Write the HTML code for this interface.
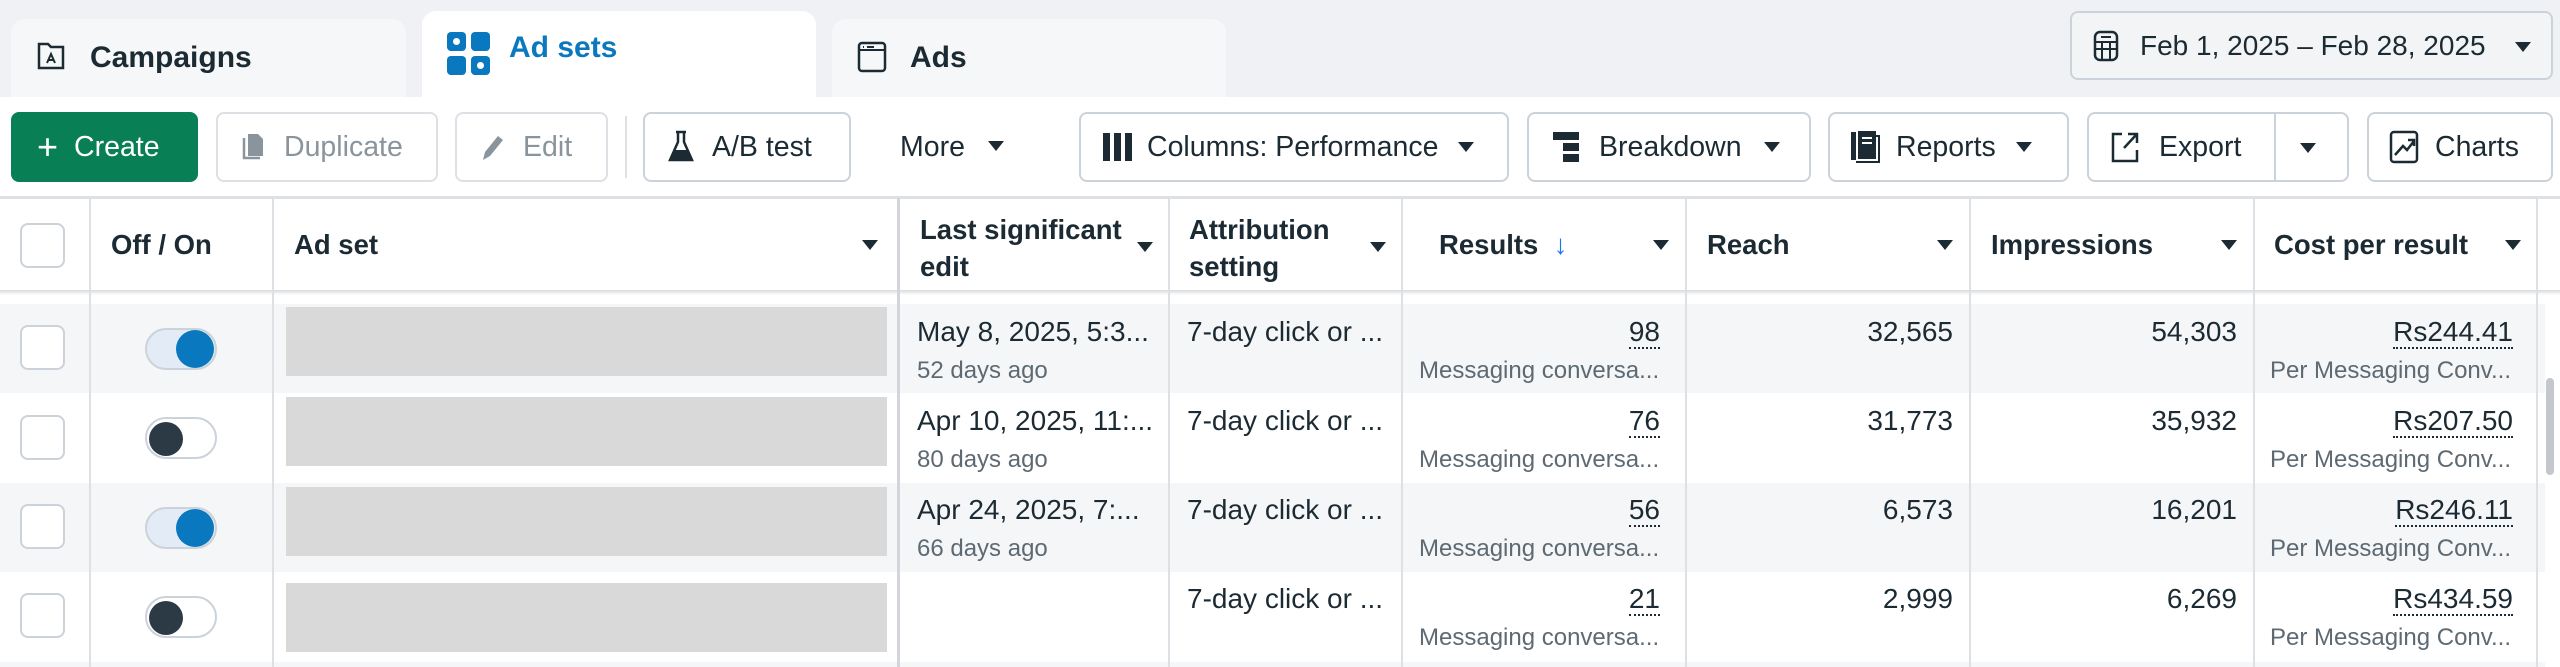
<!DOCTYPE html>
<html><head><meta charset="utf-8">
<style>
*{box-sizing:border-box;margin:0;padding:0}
html,body{width:2560px;height:667px;overflow:hidden;background:#fff}
body{font-family:"Liberation Sans",sans-serif;color:#1c2b33;position:relative}
.a{position:absolute}
.top{left:0;top:0;width:2560px;height:97px;background:#eff1f4}
.tab{position:absolute;border-radius:14px 14px 0 0;background:#f6f7f9;font-weight:bold;font-size:30px;display:flex;align-items:center}
.btn{position:absolute;top:112px;height:70px;border:2px solid #cbd2d9;border-radius:8px;background:#fff;display:flex;align-items:center;font-size:28.5px;color:#1c2b33;white-space:nowrap}
.dis{color:#8a949c;border-color:#dde1e5}
.caret{display:inline-block;width:0;height:0;border-left:8px solid transparent;border-right:8px solid transparent;border-top:10px solid #1c2b33}
.hd{position:absolute;font-size:27.5px;font-weight:bold;line-height:37px;white-space:nowrap}
.vl{position:absolute;top:198px;width:2px;height:469px;background:#dde0e4}
.row{position:absolute;left:0;width:2545px;height:89px}
.cb{position:absolute;left:20px;width:45px;height:45px;border:2px solid #cbd2d9;border-radius:8px;background:#fff}
.tg{position:absolute;left:145px;width:72px;height:42px;border-radius:21px;border:2px solid #cbd2d9}
.ph{position:absolute;left:286px;width:601px;height:69px;background:#d9d9d9}
.t{position:absolute;font-size:28px;white-space:nowrap}
.s{position:absolute;font-size:24px;color:#5e6a73;white-space:nowrap}
.n{position:absolute;font-size:28px;text-align:right;white-space:nowrap}
.u{border-bottom:2px dotted #1c2b33;line-height:30px}
</style></head><body>
<div class="a top"></div>
<div class="tab" style="left:11px;top:19px;width:395px;height:78px"><svg class="a" style="left:26px;top:22px" width="28" height="30" viewBox="0 0 28 30"><path d="M2 3h9l3 3h12v21H2z" fill="none" stroke="#1c2b33" stroke-width="2.5"/><path d="M10 22l4-9 4 9M11.5 19h5" fill="none" stroke="#1c2b33" stroke-width="2"/></svg><span style="margin-left:79px">Campaigns</span></div>
<div class="tab" style="left:422px;top:11px;width:394px;height:86px;background:#fff;color:#0a78be"><svg class="a" style="left:25px;top:21px" width="43" height="43" viewBox="0 0 43 43"><rect x="0" y="0" width="19" height="19" rx="4" fill="#0a78be"/><rect x="24" y="0" width="19" height="19" rx="4" fill="#0a78be"/><rect x="0" y="24" width="19" height="19" rx="4" fill="#0a78be"/><rect x="24" y="24" width="19" height="19" rx="4" fill="#0a78be"/><circle cx="9.5" cy="9.5" r="3.5" fill="#fff"/><circle cx="33.5" cy="33.5" r="3.5" fill="#fff"/></svg><span style="margin-left:87px;margin-top:-12px">Ad sets</span></div>
<div class="tab" style="left:832px;top:19px;width:394px;height:78px"><svg class="a" style="left:25px;top:22px" width="30" height="32" viewBox="0 0 30 32"><rect x="2" y="2" width="26" height="28" rx="3" fill="none" stroke="#1c2b33" stroke-width="2.5"/><path d="M2 9h26M6 6h1M10 6h7" stroke="#1c2b33" stroke-width="2"/></svg><span style="margin-left:78px">Ads</span></div>
<div class="a" style="left:2070px;top:11px;width:483px;height:69px;border:2px solid #cbd2d9;border-radius:8px;background:#f2f4f6;display:flex;align-items:center;font-size:28px;white-space:nowrap"><svg class="a" style="left:21px;top:17px" width="26" height="32" viewBox="0 0 26 32"><rect x="2" y="2" width="22" height="28" rx="5" fill="none" stroke="#1c2b33" stroke-width="2.5"/><path d="M2 12h22M2 19h22M9 12v18M17 12v18M8 7h10" stroke="#1c2b33" stroke-width="2"/></svg><span style="margin-left:68px">Feb 1, 2025 – Feb 28, 2025</span><span class="caret a" style="left:443px;top:29px"></span></div>

<div class="btn" style="left:11px;width:187px;background:#087f55;border-color:#087f55;color:#fff"><span style="margin-left:24px;font-size:36px;font-weight:300">+</span><span style="margin-left:16px">Create</span></div>
<div class="btn dis" style="left:216px;width:222px"><svg style="margin-left:22px" width="26" height="30" viewBox="0 0 26 30"><path d="M4 6v20h16" fill="none" stroke="#8a949c" stroke-width="2.5"/><path d="M8 2h10l5 5v17H8z" fill="#8a949c"/></svg><span style="margin-left:18px">Duplicate</span></div>
<div class="btn dis" style="left:455px;width:153px"><svg style="margin-left:22px" width="26" height="30" viewBox="0 0 26 30"><path d="M4 28l2-8L19 4l5 4L11 24z" fill="#8a949c"/></svg><span style="margin-left:18px">Edit</span></div>
<div class="a" style="left:625px;top:116px;width:2px;height:62px;background:#dde0e4"></div>
<div class="btn" style="left:643px;width:208px"><svg style="margin-left:23px" width="26" height="34" viewBox="0 0 26 34"><path d="M8 2h10M10 2v10L2 30h22L16 12V2" fill="none" stroke="#1c2b33" stroke-width="2.5"/><path d="M6 20h14l4 10H2z" fill="#1c2b33"/></svg><span style="margin-left:18px">A/B test</span></div>
<div class="a" style="left:900px;top:131px;font-size:28.5px">More</div><span class="caret a" style="left:988px;top:141px"></span>
<div class="btn" style="left:1079px;width:430px"><svg style="margin-left:22px" width="30" height="28" viewBox="0 0 30 28"><rect x="0" y="0" width="7" height="28" fill="#1c2b33"/><rect x="11" y="0" width="7" height="28" fill="#1c2b33"/><rect x="22" y="0" width="7" height="28" fill="#1c2b33"/></svg><span style="margin-left:14px">Columns: Performance</span><span class="caret" style="margin-left:20px"></span></div>
<div class="btn" style="left:1527px;width:284px"><svg style="margin-left:24px" width="26" height="30" viewBox="0 0 26 30"><rect x="0" y="0" width="26" height="8" fill="#1c2b33"/><rect x="10" y="11" width="16" height="8" fill="#1c2b33"/><rect x="10" y="22" width="16" height="8" fill="#1c2b33"/></svg><span style="margin-left:20px">Breakdown</span><span class="caret" style="margin-left:22px"></span></div>
<div class="btn" style="left:1828px;width:241px"><svg style="margin-left:20px" width="30" height="34" viewBox="0 0 30 34"><rect x="1" y="2" width="5" height="28" fill="#1c2b33"/><rect x="8" y="1" width="18" height="28" fill="#1c2b33"/><path d="M12 8h10M12 13h10" stroke="#fff" stroke-width="2"/><path d="M26 6h3v26H6" fill="none" stroke="#1c2b33" stroke-width="2"/></svg><span style="margin-left:16px">Reports</span><span class="caret" style="margin-left:20px"></span></div>
<div class="btn" style="left:2087px;width:262px"><svg style="margin-left:21px" width="30" height="34" viewBox="0 0 30 34"><path d="M12 4H3v27h24V20" fill="none" stroke="#1c2b33" stroke-width="2.5"/><path d="M14 18L26 5M18 4h9v9" fill="none" stroke="#1c2b33" stroke-width="2.5"/></svg><span style="margin-left:19px">Export</span><div class="a" style="left:185px;top:0;width:2px;height:66px;background:#cbd2d9"></div><span class="caret a" style="left:211px;top:29px"></span></div>
<div class="btn" style="left:2367px;width:186px"><svg style="margin-left:20px" width="30" height="34" viewBox="0 0 30 34"><rect x="2" y="2" width="26" height="30" rx="3" fill="none" stroke="#1c2b33" stroke-width="2.5"/><path d="M6 25l8-9 4 4 7-9M19 10h6v6" fill="none" stroke="#1c2b33" stroke-width="2.5"/></svg><span style="margin-left:16px">Charts</span></div>

<div class="a" style="left:0;top:196px;width:2560px;height:3px;background:#dde0e4"></div>
<div class="a" style="left:0;top:290px;width:2560px;height:5px;background:linear-gradient(#d7dade,#fff)"></div>
<div class="cb" style="top:223px"></div>
<div class="hd" style="left:111px;top:226px">Off / On</div>
<div class="hd" style="left:294px;top:226px">Ad set</div><span class="caret a" style="left:862px;top:240px"></span>
<div class="hd" style="left:920px;top:211px">Last significant<br>edit</div><span class="caret a" style="left:1137px;top:242px"></span>
<div class="hd" style="left:1189px;top:211px">Attribution<br>setting</div><span class="caret a" style="left:1370px;top:242px"></span>
<div class="hd" style="left:1439px;top:226px">Results&nbsp; <span style="color:#1877f2;font-weight:normal">↓</span></div><span class="caret a" style="left:1653px;top:240px"></span>
<div class="hd" style="left:1707px;top:226px">Reach</div><span class="caret a" style="left:1937px;top:240px"></span>
<div class="hd" style="left:1991px;top:226px">Impressions</div><span class="caret a" style="left:2221px;top:240px"></span>
<div class="hd" style="left:2274px;top:226px">Cost per result</div><span class="caret a" style="left:2505px;top:240px"></span>

<div class="row" style="top:304px;background:#f5f6f7"></div>
<div class="row" style="top:483px;background:#f5f6f7"></div>
<div class="row" style="top:662px;height:5px;background:#f5f6f7"></div>

<div class="vl" style="left:89px"></div><div class="vl" style="left:272px"></div><div class="vl" style="left:897px;width:3px;background:#d2d5d9"></div><div class="vl" style="left:1168px"></div><div class="vl" style="left:1401px"></div><div class="vl" style="left:1685px"></div><div class="vl" style="left:1969px"></div><div class="vl" style="left:2253px"></div><div class="vl" style="left:2536px"></div>

<div class="cb" style="top:325px"></div><div class="tg" style="top:328px;background:#e3ecf6"><div class="a" style="right:1px;top:0;width:38px;height:38px;border-radius:50%;background:#0a78be"></div></div><div class="ph" style="top:307px"></div>
<div class="cb" style="top:415px"></div><div class="tg" style="top:417px;background:#fff"><div class="a" style="left:2px;top:3px;width:34px;height:34px;border-radius:50%;background:#2b3a44"></div></div><div class="ph" style="top:397px"></div>
<div class="cb" style="top:504px"></div><div class="tg" style="top:507px;background:#e3ecf6"><div class="a" style="right:1px;top:0;width:38px;height:38px;border-radius:50%;background:#0a78be"></div></div><div class="ph" style="top:487px"></div>
<div class="cb" style="top:593px"></div><div class="tg" style="top:596px;background:#fff"><div class="a" style="left:2px;top:3px;width:34px;height:34px;border-radius:50%;background:#2b3a44"></div></div><div class="ph" style="top:583px"></div>

<div class="t" style="left:917px;top:316px">May 8, 2025, 5:3...</div><div class="s" style="left:917px;top:357px">52 days ago</div>
<div class="t" style="left:917px;top:405px">Apr 10, 2025, 11:...</div><div class="s" style="left:917px;top:446px">80 days ago</div>
<div class="t" style="left:917px;top:494px">Apr 24, 2025, 7:...</div><div class="s" style="left:917px;top:535px">66 days ago</div>

<div class="t" style="left:1187px;top:316px">7-day click or ...</div>
<div class="t" style="left:1187px;top:405px">7-day click or ...</div>
<div class="t" style="left:1187px;top:494px">7-day click or ...</div>
<div class="t" style="left:1187px;top:583px">7-day click or ...</div>

<div class="n" style="right:900px;top:316px"><span class="u">98</span></div><div class="s" style="left:1419px;top:357px">Messaging conversa...</div>
<div class="n" style="right:900px;top:405px"><span class="u">76</span></div><div class="s" style="left:1419px;top:446px">Messaging conversa...</div>
<div class="n" style="right:900px;top:494px"><span class="u">56</span></div><div class="s" style="left:1419px;top:535px">Messaging conversa...</div>
<div class="n" style="right:900px;top:583px"><span class="u">21</span></div><div class="s" style="left:1419px;top:624px">Messaging conversa...</div>

<div class="n" style="right:607px;top:316px">32,565</div><div class="n" style="right:607px;top:405px">31,773</div><div class="n" style="right:607px;top:494px">6,573</div><div class="n" style="right:607px;top:583px">2,999</div>
<div class="n" style="right:323px;top:316px">54,303</div><div class="n" style="right:323px;top:405px">35,932</div><div class="n" style="right:323px;top:494px">16,201</div><div class="n" style="right:323px;top:583px">6,269</div>

<div class="n" style="right:47px;top:316px"><span class="u">Rs244.41</span></div><div class="s" style="left:2270px;top:357px">Per Messaging Conv...</div>
<div class="n" style="right:47px;top:405px"><span class="u">Rs207.50</span></div><div class="s" style="left:2270px;top:446px">Per Messaging Conv...</div>
<div class="n" style="right:47px;top:494px"><span class="u">Rs246.11</span></div><div class="s" style="left:2270px;top:535px">Per Messaging Conv...</div>
<div class="n" style="right:47px;top:583px"><span class="u">Rs434.59</span></div><div class="s" style="left:2270px;top:624px">Per Messaging Conv...</div>

<div class="a" style="left:2546px;top:378px;width:8px;height:97px;border-radius:4px;background:#c4c8cc"></div>
</body></html>
